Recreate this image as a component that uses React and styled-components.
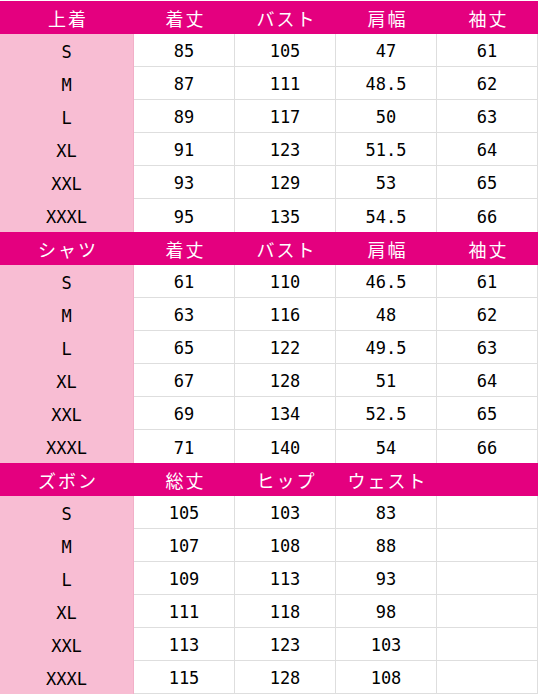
import React from "react";
import styled, { createGlobalStyle } from "styled-components";

const Global = createGlobalStyle`
  html, body { margin: 0; padding: 0; background: #ffffff; }
  body { font-family: "DejaVu Sans Mono", "Noto Sans CJK JP", monospace; }
`;

const Page = styled.div`
  width: 538px;
  padding-top: 1px;
`;

const Grid = styled.div`
  display: grid;
  grid-template-columns: 134px 101px 101px 101px 101px;
  grid-auto-rows: 33px;
  width: 538px;
`;

const HeadCell = styled.div`
  background: #e4007f;
  color: #ffffff;
  display: flex;
  align-items: center;
  justify-content: center;
  font-family: "Noto Sans CJK JP", sans-serif;
  font-size: 18px;
  letter-spacing: 2px;
  padding-left: 2px;
  box-sizing: border-box;
`;

const SizeCell = styled.div`
  background: #f8bdd3;
  border-right: 1px solid #f2b0c8;
  color: #000;
  display: flex;
  align-items: center;
  justify-content: center;
  font-family: "DejaVu Sans Mono", monospace;
  font-size: 17px;
  padding-top: 2px;
  box-sizing: border-box;
`;

const DataCell = styled.div`
  background: #ffffff;
  color: #000;
  display: flex;
  align-items: center;
  justify-content: center;
  font-family: "DejaVu Sans Mono", monospace;
  font-size: 17px;
  padding-top: 2px;
  box-sizing: border-box;
  border-right: 1px solid #dedede;
  border-bottom: ${(p) => (p.$last && !p.$end ? "none" : "1px solid #dedede")};
`;

const sections = [
  {
    title: "上着",
    cols: ["着丈", "バスト", "肩幅", "袖丈"],
    rows: [
      ["S", "85", "105", "47", "61"],
      ["M", "87", "111", "48.5", "62"],
      ["L", "89", "117", "50", "63"],
      ["XL", "91", "123", "51.5", "64"],
      ["XXL", "93", "129", "53", "65"],
      ["XXXL", "95", "135", "54.5", "66"],
    ],
  },
  {
    title: "シャツ",
    cols: ["着丈", "バスト", "肩幅", "袖丈"],
    rows: [
      ["S", "61", "110", "46.5", "61"],
      ["M", "63", "116", "48", "62"],
      ["L", "65", "122", "49.5", "63"],
      ["XL", "67", "128", "51", "64"],
      ["XXL", "69", "134", "52.5", "65"],
      ["XXXL", "71", "140", "54", "66"],
    ],
  },
  {
    title: "ズボン",
    cols: ["総丈", "ヒップ", "ウェスト", ""],
    rows: [
      ["S", "105", "103", "83", ""],
      ["M", "107", "108", "88", ""],
      ["L", "109", "113", "93", ""],
      ["XL", "111", "118", "98", ""],
      ["XXL", "113", "123", "103", ""],
      ["XXXL", "115", "128", "108", ""],
    ],
  },
];

export default function App() {
  return (
    <Page>
      <Global />
      <Grid>
        {sections.map((s, si) => (
          <React.Fragment key={s.title}>
            <HeadCell>{s.title}</HeadCell>
            {s.cols.map((c, ci) => (
              <HeadCell key={ci}>{c}</HeadCell>
            ))}
            {s.rows.map((r, ri) => (
              <React.Fragment key={ri}>
                <SizeCell>{r[0]}</SizeCell>
                {r.slice(1).map((v, vi) => (
                  <DataCell
                    key={vi}
                    $last={ri === s.rows.length - 1}
                    $end={si === sections.length - 1}
                  >
                    {v}
                  </DataCell>
                ))}
              </React.Fragment>
            ))}
          </React.Fragment>
        ))}
      </Grid>
    </Page>
  );
}
